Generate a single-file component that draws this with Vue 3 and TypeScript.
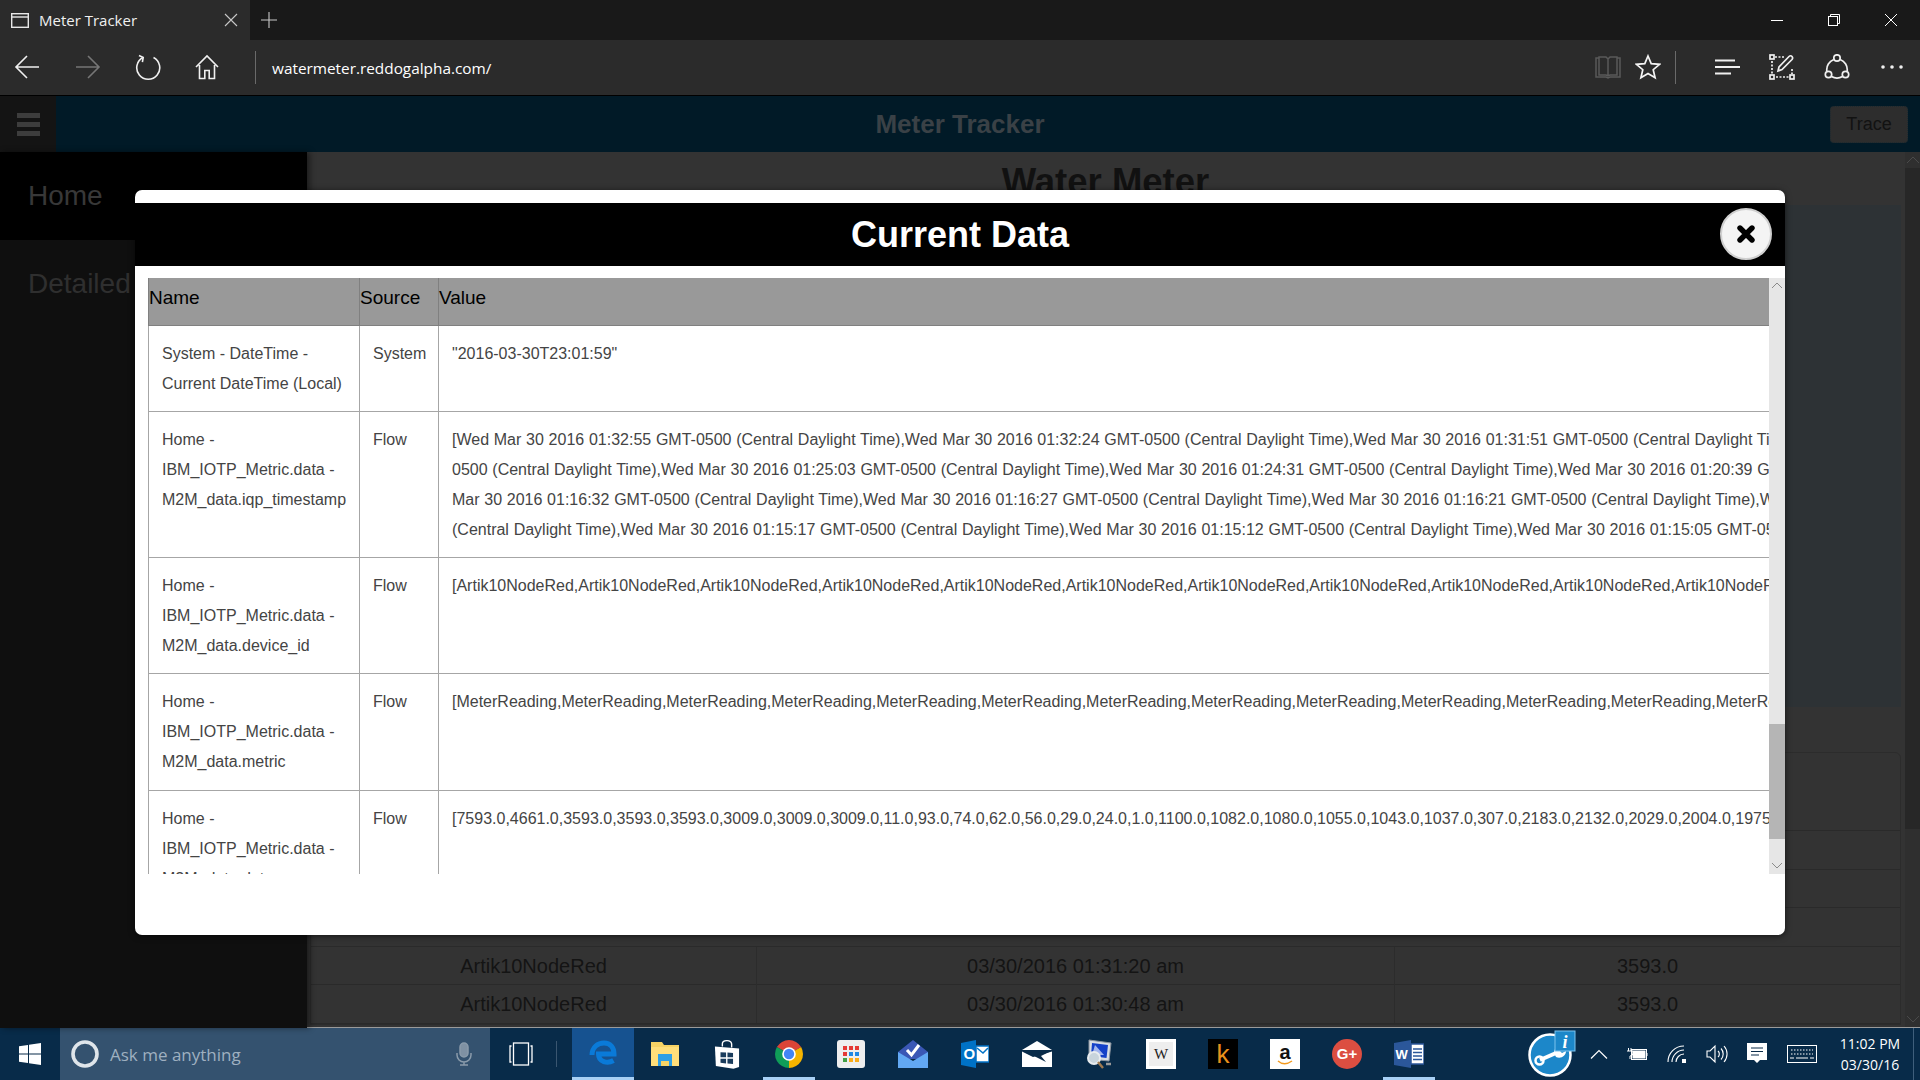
<script setup lang="ts">
interface Row {
  name: string[]
  source: string
  value: string[]
}

const dates = '[Wed Mar 30 2016 01:32:55 GMT-0500 (Central Daylight Time),Wed Mar 30 2016 01:32:24 GMT-0500 (Central Daylight Time),Wed Mar 30 2016 01:31:51 GMT-0500 (Central Daylight Time),Wed Mar 30 2016 01:31:20 GMT-'

const rows: Row[] = [
  {
    name: ['System - DateTime -', 'Current DateTime (Local)'],
    source: 'System',
    value: ['"2016-03-30T23:01:59"'],
  },
  {
    name: ['Home -', 'IBM_IOTP_Metric.data -', 'M2M_data.iqp_timestamp'],
    source: 'Flow',
    value: [
      dates,
      '0500 (Central Daylight Time),Wed Mar 30 2016 01:25:03 GMT-0500 (Central Daylight Time),Wed Mar 30 2016 01:24:31 GMT-0500 (Central Daylight Time),Wed Mar 30 2016 01:20:39 GMT-0500 (Central Daylight Time),Wed',
      'Mar 30 2016 01:16:32 GMT-0500 (Central Daylight Time),Wed Mar 30 2016 01:16:27 GMT-0500 (Central Daylight Time),Wed Mar 30 2016 01:16:21 GMT-0500 (Central Daylight Time),Wed Mar 30 2016 01:16:15 GMT-0500',
      '(Central Daylight Time),Wed Mar 30 2016 01:15:17 GMT-0500 (Central Daylight Time),Wed Mar 30 2016 01:15:12 GMT-0500 (Central Daylight Time),Wed Mar 30 2016 01:15:05 GMT-0500 (Central Daylight Time),Wed',
    ],
  },
  {
    name: ['Home -', 'IBM_IOTP_Metric.data -', 'M2M_data.device_id'],
    source: 'Flow',
    value: ['[' + Array(16).fill('Artik10NodeRed').join(',')],
  },
  {
    name: ['Home -', 'IBM_IOTP_Metric.data -', 'M2M_data.metric'],
    source: 'Flow',
    value: ['[' + Array(16).fill('MeterReading').join(',')],
  },
  {
    name: ['Home -', 'IBM_IOTP_Metric.data -', 'M2M_data.data'],
    source: 'Flow',
    value: ['[7593.0,4661.0,3593.0,3593.0,3593.0,3009.0,3009.0,3009.0,11.0,93.0,74.0,62.0,56.0,29.0,24.0,1.0,1100.0,1082.0,1080.0,1055.0,1043.0,1037.0,307.0,2183.0,2132.0,2029.0,2004.0,1975.0,1950.0,1925.0'],
  },
]

const coveredRows = [1, 2, 3]

const readings = [
  { device: 'Artik10NodeRed', time: '03/30/2016 01:31:20 am', value: '3593.0' },
  { device: 'Artik10NodeRed', time: '03/30/2016 01:30:48 am', value: '3593.0' },
]
</script>

<template>
  <div class="screen">
    <!-- Browser tab strip -->
    <div class="tabstrip">
      <div class="tab">
        <svg class="tab-icon" width="18" height="15" viewBox="0 0 18 15" fill="none" stroke="#e8e8e8" stroke-width="1.4">
          <rect x="0.7" y="0.7" width="16.6" height="13.6" />
          <path d="M1 4h16" />
        </svg>
        <span class="tab-title">Meter Tracker</span>
        <svg class="tab-close" width="14" height="14" viewBox="0 0 14 14" stroke="#c8c8c8" stroke-width="1.1">
          <path d="M1 1l12 12M13 1L1 13" />
        </svg>
      </div>
      <svg class="tab-add" width="18" height="18" viewBox="0 0 18 18" stroke="#c8c8c8" stroke-width="1.1">
        <path d="M9 1v16M1 9h16" />
      </svg>
      <div class="winctl">
        <span class="winbtn">
          <svg width="14" height="14" viewBox="0 0 14 14" stroke="#fff" stroke-width="1"><path d="M1 7.5h12" /></svg>
        </span>
        <span class="winbtn">
          <svg width="14" height="14" viewBox="0 0 14 14" fill="none" stroke="#fff" stroke-width="1"><rect x="1.5" y="3.5" width="9" height="9" /><path d="M3.5 3.5v-2h9v9h-2" /></svg>
        </span>
        <span class="winbtn">
          <svg width="14" height="14" viewBox="0 0 14 14" stroke="#fff" stroke-width="1"><path d="M1 1l12 12M13 1L1 13" /></svg>
        </span>
      </div>
    </div>

    <!-- Browser toolbar -->
    <div class="toolbar">
      <svg class="tb-nav" width="26" height="26" viewBox="0 0 26 26" fill="none" stroke="#f0f0f0" stroke-width="1.6"><path d="M25 13H2M13 2L2 13l11 11" /></svg>
      <svg class="tb-nav" width="26" height="26" viewBox="0 0 26 26" fill="none" stroke="#767676" stroke-width="1.6"><path d="M1 13h23M13 2l11 11-11 11" /></svg>
      <svg class="tb-nav tb-refresh" width="26" height="28" viewBox="0 0 26 28" fill="none" stroke="#f0f0f0" stroke-width="1.6"><path d="M8 4.5a11.5 11.5 0 1 0 10.5 0" /><path d="M4 2.5l4.2 2-.8 4.6" /></svg>
      <svg class="tb-nav tb-home" width="24" height="26" viewBox="0 0 24 26" fill="none" stroke="#f0f0f0" stroke-width="1.6"><path d="M1 13L12 2l11 11M4.5 11v13.5h5.3v-8h4.4v8h5.3V11" /></svg>
      <span class="tb-sep tb-sep-left"></span>
      <span class="url">watermeter.reddogalpha.com/</span>
      <div class="tb-right">
        <svg class="tb-r" width="26" height="24" viewBox="0 0 26 24" fill="none" stroke="#5a5a5a" stroke-width="1.5"><path d="M4 3H1v19h10l2 1 2-1h10V3h-3" /><path d="M4 20V2h7l2 2 2-2h7v18h-7l-2 1-2-1zM13 4v17" /></svg>
        <svg class="tb-r tb-star" width="26" height="26" viewBox="0 0 26 26" fill="none" stroke="#f4f4f4" stroke-width="1.7"><path d="M13 2l3.200 7.600 8.300.7-6.300 5.400 1.900 8.100L13 19.500l-7.100 4.300 1.900-8.100-6.300-5.400 8.300-.7z" /></svg>
        <span class="tb-sep"></span>
        <svg class="tb-r tb-hub" width="26" height="16" viewBox="0 0 26 16" stroke="#f0f0f0" stroke-width="1.8"><path d="M1 1.500h20M1 8h25M1 14.500h16" /></svg>
        <svg class="tb-r tb-note" width="26" height="26" viewBox="0 0 26 26" fill="none" stroke="#f0f0f0" stroke-width="1.7">
          <path d="M6 3h10M3 7v13M7 23h13M23 15v5" stroke-dasharray="2 1.500" />
          <rect x="1" y="1" width="4" height="4" /><rect x="1" y="21" width="4" height="4" /><rect x="21" y="21" width="4" height="4" />
          <path d="M9 17l1-4L20 2.500c1-1 2.200-1 3 0s.8 2 0 3L13 15.500z" />
        </svg>
        <svg class="tb-r tb-share" width="26" height="26" viewBox="0 0 26 26" fill="none" stroke="#f0f0f0" stroke-width="1.7">
          <circle cx="13" cy="4" r="3.200" /><circle cx="4.500" cy="20.500" r="3.200" /><circle cx="21.500" cy="20.500" r="3.200" />
          <path d="M9.800 5.500a11 11 0 0 0-7 11.500M16.200 5.500a11 11 0 0 1 7 11.500M7.500 22.500a11 11 0 0 0 11 0" />
        </svg>
        <svg class="tb-r tb-more" width="24" height="6" viewBox="0 0 24 6" fill="#f0f0f0"><circle cx="3" cy="3" r="1.800" /><circle cx="12" cy="3" r="1.800" /><circle cx="21" cy="3" r="1.800" /></svg>
      </div>
    </div>

    <!-- The page -->
    <div class="app">
      <header class="app-head">
        <div class="head-left">
          <div class="burger"><span></span><span></span><span></span></div>
        </div>
        <div class="app-title">Meter Tracker</div>
        <div class="head-right"><button class="trace">Trace</button></div>
      </header>
      <div class="app-body">
        <nav class="sidebar">
          <div class="side-item side-active">Home</div>
          <div class="side-item">Detailed</div>
        </nav>
        <main class="content">
          <div class="page">
            <h1 class="page-title">Water Meter</h1>
            <div class="chart-panel"></div>
            <div class="history">
              <div class="history-head"></div>
              <div v-for="c in coveredRows" :key="c" class="history-row"></div>
              <div v-for="r in readings" :key="r.time" class="history-row">
                <span class="hc hc-a">{{ r.device }}</span>
                <span class="hc hc-b">{{ r.time }}</span>
                <span class="hc hc-c">{{ r.value }}</span>
              </div>
            </div>
          </div>
          <div class="page-scroll">
            <svg class="chev" width="14" height="8" viewBox="0 0 14 8" fill="none" stroke="#4a4a4a"><path d="M1 7l6-6 6 6" /></svg>
            <div class="page-thumb"></div>
            <div class="page-track"></div>
            <svg class="chev" width="14" height="8" viewBox="0 0 14 8" fill="none" stroke="#4a4a4a"><path d="M1 1l6 6 6-6" /></svg>
          </div>
        </main>
      </div>
    </div>

    <!-- Windows taskbar -->
    <footer class="taskbar">
      <div class="start">
        <svg width="22" height="22" viewBox="0 0 22 22" fill="#fff"><path d="M0 3.200l9-1.300v8.500H0zM10 1.700L22 0v10.400H10zM0 11.500h9V20L0 18.800zM10 11.500h12V22l-12-1.800z" /></svg>
      </div>
      <div class="search">
        <svg class="cortana" width="30" height="30" viewBox="0 0 30 30" fill="none"><circle cx="15" cy="15" r="12" stroke="#dfe5ea" stroke-width="3.600" /></svg>
        <span class="search-text">Ask me anything</span>
        <svg class="mic" width="16" height="24" viewBox="0 0 16 24" fill="none" stroke="#8a9bab" stroke-width="1.500"><rect x="4" y="1" width="8" height="14" rx="4" fill="#7f91a3" /><path d="M1 11v2a7 7 0 0 0 14 0v-2M8 20v3M4 23h8" /></svg>
      </div>
      <div class="taskview">
        <svg width="24" height="24" viewBox="0 0 24 24" fill="none" stroke="#fff" stroke-width="1.300"><rect x="4.500" y="1" width="15" height="22" /><path d="M2.500 4H1v16h1.500M21.500 4H23v16h-1.500" /></svg>
      </div>
      <span class="task-sep"></span>

      <div class="slot slot-edge">
        <svg width="28" height="28" viewBox="0 0 28 28" fill="none" stroke="#0a7ad8" stroke-width="5"><path d="M3 15C3 7 9 3 15 3c6.500 0 10 4.500 10 11H9.500c0 8 9 10 15 6.500" /></svg>
      </div>
      <div class="slot">
        <svg width="28" height="24" viewBox="0 0 28 24">
          <path d="M0 0h11l2 3h15v21H0z" fill="#f6d365" />
          <path d="M0 5h28v19H0z" fill="#ffdf7a" />
          <path d="M7 12h14v12h-3v-5h-8v5H7z" fill="#2d9fe6" />
          <path d="M10 19h8v5h-8z" fill="#f6d365" />
        </svg>
      </div>
      <div class="slot">
        <svg width="26" height="32" viewBox="0 0 28 32">
          <path d="M9 8V5c0-4 9-5 10 0v4" fill="none" stroke="#fff" stroke-width="1.500" />
          <path d="M1 8l26 2v20l-6 2L2 29z" fill="#fff" />
          <path d="M7 14l6 .4v5.200H7zM14.500 14.500l6 .4v4.700h-6zM7 21h6v5.200l-6-.7zM14.500 21h6v5.900l-6-.6z" fill="#1a3c5c" />
        </svg>
      </div>
      <div class="slot slot-open">
        <svg width="28" height="28" viewBox="0 0 28 28">
          <path d="M14 14L1.880 7A14 14 0 0 1 26.120 7z" fill="#db4437" />
          <path d="M14 14L26.120 7A14 14 0 0 1 14 28z" fill="#f4b400" />
          <path d="M14 14L14 28A14 14 0 0 1 1.880 7z" fill="#0f9d58" />
          <circle cx="14" cy="14" r="6.800" fill="#fff" /><circle cx="14" cy="14" r="5.200" fill="#4285f4" />
        </svg>
      </div>
      <div class="slot">
        <svg width="28" height="28" viewBox="0 0 28 28">
          <rect width="28" height="28" rx="3" fill="#eeeeee" />
          <g fill="#e53935"><rect x="6" y="6" width="4" height="4" /><rect x="12" y="6" width="4" height="4" /><rect x="18" y="6" width="4" height="4" /><rect x="6" y="12" width="4" height="4" /></g>
          <g fill="#1e88e5"><rect x="12" y="12" width="4" height="4" /><rect x="18" y="12" width="4" height="4" /></g>
          <g fill="#43a047"><rect x="6" y="18" width="4" height="4" /></g>
          <g fill="#fbac19"><rect x="12" y="18" width="4" height="4" /><rect x="18" y="18" width="4" height="4" /></g>
        </svg>
      </div>
      <div class="slot">
        <svg width="30" height="28" viewBox="0 0 30 28">
          <path d="M0 12L15 0l15 12v7H0z" fill="#3a57b5" />
          <path d="M0 12l15 9 15-9v16H0z" fill="#62a8f3" />
          <path d="M9 10l4.500 5L21 5" fill="none" stroke="#fff" stroke-width="3" />
        </svg>
      </div>
      <div class="slot">
        <svg width="28" height="28" viewBox="0 0 28 28">
          <path d="M0 3l15-3v28L0 25z" fill="#0072c6" />
          <path d="M15 6h13v16H15z" fill="#fff" stroke="#0072c6" stroke-width="1.500" />
          <path d="M16 8l6 5 5-5" fill="none" stroke="#0072c6" stroke-width="1.500" />
          <text class="ol-o" x="2.500" y="19">O</text>
        </svg>
      </div>
      <div class="slot">
        <svg width="30" height="26" viewBox="0 0 30 26">
          <path d="M15 0l15 9H0z" fill="#fff" />
          <path d="M0 10.500l11 5.500 19-5.500V26H0z" fill="#fff" />
          <path d="M12 15L30 9.500 19 15l5 6z" fill="#0a2b48" />
        </svg>
      </div>
      <div class="slot">
        <svg width="28" height="30" viewBox="0 0 28 30">
          <path d="M4 1l22 3-2 18-20-2z" fill="#d8dde3" stroke="#8b949e" />
          <path d="M7 4l16 2-1.500 13L6 17z" fill="#1440c8" />
          <path d="M10 6l9 10-12 0z" fill="#dfe8ff" opacity=".7" />
          <circle cx="9" cy="19" r="6" fill="#c8d4dc" stroke="#e8ecef" stroke-width="2" />
          <path d="M13 23l5 6" stroke="#a07a50" stroke-width="2.500" />
          <path d="M21 25h5" stroke="#999" stroke-width="2.500" />
        </svg>
      </div>
      <div class="slot">
        <div class="tile tile-w"><span>W</span></div>
      </div>
      <div class="slot">
        <div class="tile tile-k">k</div>
      </div>
      <div class="slot">
        <div class="tile tile-a">
          <span>a</span>
          <svg width="16" height="5" viewBox="0 0 16 5" fill="none" stroke="#f39a1f" stroke-width="1.500"><path d="M1 1c4 3.500 9 3.500 14 0" /></svg>
        </div>
      </div>
      <div class="slot">
        <div class="gplus">G+</div>
      </div>
      <div class="slot slot-open">
        <svg width="30" height="28" viewBox="0 0 30 28">
          <path d="M0 3l17-3v28L0 25z" fill="#2b579a" />
          <path d="M17 4h13v20H17z" fill="#fff" stroke="#2b579a" stroke-width="1.500" />
          <path d="M19 9h9M19 12.500h9M19 16h9M19 19.500h9" stroke="#2b579a" stroke-width="1.500" />
          <text class="wd-w" x="1.500" y="19">W</text>
        </svg>
      </div>

      <div class="tray">
        <div class="tray-repair">
          <svg width="50" height="48" viewBox="0 0 50 48">
            <circle cx="22" cy="25" r="20.500" fill="#1c87c9" stroke="#fff" stroke-width="2.500" />
            <path d="M12 30l16-7" stroke="#fff" stroke-width="4" />
            <circle cx="11.500" cy="30.500" r="4" fill="none" stroke="#fff" stroke-width="2.500" />
            <path d="M26 23c0-5 4-7 8-6l-3 3 3 3 4-2c0 5-5 8-10 6" fill="#fff" />
            <rect x="27" y="1" width="20" height="20" fill="#1c87c9" stroke="#7cc3ee" />
            <text class="info-i" x="37" y="18">i</text>
          </svg>
        </div>
        <div class="tray-ic tray-chev">
          <svg width="18" height="10" viewBox="0 0 18 10" fill="none" stroke="#fff" stroke-width="1.200"><path d="M1 9.500L9 1.500l8 8" /></svg>
        </div>
        <div class="tray-ic">
          <svg width="22" height="14" viewBox="0 0 22 14" fill="none" stroke="#fff"><rect x="5.500" y="2.500" width="15" height="10" /><rect x="7" y="4" width="12" height="7" fill="#fff" /><path d="M21 6v3M2.500 1v3M5 1v3" /><path d="M1 4h6v2a3 3 0 0 1-3 3v3" /></svg>
        </div>
        <div class="tray-ic">
          <svg width="20" height="18" viewBox="0 0 20 18" fill="none" stroke="#fff" stroke-width="1.100"><path d="M1 17C1 8 8 1 17 1M5 17c0-6.500 5.500-12 12-12M9 17c0-4 3.500-8 8-8" /><rect x="15" y="14" width="4" height="4" fill="#fff" stroke="none" /></svg>
        </div>
        <div class="tray-ic">
          <svg width="22" height="20" viewBox="0 0 22 20" fill="none" stroke="#fff" stroke-width="1.100"><path d="M1 7h3l5-5v16l-5-5H1zM12 7a4 4 0 0 1 0 6M15 4.500a8 8 0 0 1 0 11M18 2a12 12 0 0 1 0 16" /></svg>
        </div>
        <div class="tray-ic">
          <svg width="20" height="22" viewBox="0 0 20 22"><path d="M0 0h20v17h-7l-3 3-3-3H0z" fill="#fff" /><path d="M4 5h12M4 8.500h12M4 12h8" stroke="#0a2b48" stroke-width="1.200" /></svg>
        </div>
        <div class="tray-ic tray-kbd">
          <svg width="30" height="18" viewBox="0 0 30 18" fill="none" stroke="#fff"><rect x="0.500" y="0.500" width="29" height="17" /><path d="M4 5h22M4 9h22" stroke-dasharray="1.500 1.500" /><path d="M3 13h4M9 13h12M23 13h4" /></svg>
        </div>
        <div class="clock">
          <span>11:02 PM</span>
          <span>03/30/16</span>
        </div>
        <span class="show-desktop"></span>
      </div>
    </footer>

    <!-- Modal over the page -->
    <section class="modal">
      <div class="modal-head">
        <h2 class="modal-title">Current Data</h2>
        <button class="modal-close" aria-label="Close">
          <svg width="18" height="18" viewBox="0 0 18 18" stroke="#000" stroke-width="5.400" stroke-linecap="round"><path d="M3 3l12 12M15 3L3 15" /></svg>
        </button>
      </div>
      <div class="modal-body">
        <div class="table-clip">
          <table class="data">
            <colgroup>
              <col class="col-name" />
              <col class="col-source" />
              <col class="col-value" />
            </colgroup>
            <thead>
              <tr><th>Name</th><th>Source</th><th>Value</th></tr>
            </thead>
            <tbody>
              <tr v-for="row in rows" :key="row.name.join()">
                <td><div v-for="n in row.name" :key="n">{{ n }}</div></td>
                <td>{{ row.source }}</td>
                <td><div v-for="v in row.value" :key="v" class="nowrap">{{ v }}</div></td>
              </tr>
            </tbody>
          </table>
        </div>
        <div class="vscroll">
          <svg class="chev" width="12" height="7" viewBox="0 0 12 7" fill="none" stroke="#8a8a8a"><path d="M1 6l5-5 5 5" /></svg>
          <div class="vs-gap"></div>
          <div class="vs-thumb"></div>
          <div class="vs-rest"></div>
          <svg class="chev" width="12" height="7" viewBox="0 0 12 7" fill="none" stroke="#8a8a8a"><path d="M1 1l5 5 5-5" /></svg>
        </div>
      </div>
    </section>
  </div>
</template>

<style scoped>
.screen {
  position: relative;
  width: 1920px;
  height: 1080px;
  overflow: hidden;
  display: flex;
  flex-direction: column;
  font-family: "Liberation Sans", Arial, sans-serif;
  background: #333;
}

/* tab strip */
.tabstrip {
  height: 40px;
  flex: none;
  display: flex;
  align-items: center;
  background: #191919;
}
.tab {
  width: 250px;
  height: 40px;
  display: flex;
  align-items: center;
  padding-left: 11px;
  box-sizing: border-box;
  background: #2b2b2b;
}
.tab-title {
  margin-left: 10px;
  color: #f0f0f0;
  font: 15px "Open Sans", sans-serif;
  flex: 1;
}
.tab-close { margin-right: 12px; }
.tab-add { margin-left: 10px; }
.winctl { margin-left: auto; display: flex; padding-right: 1px; }
.winbtn {
  width: 57px;
  display: flex;
  justify-content: center;
}

/* toolbar */
.toolbar {
  height: 56px;
  flex: none;
  box-sizing: border-box;
  border-bottom: 1px solid #000;
  background: #2b2b2b;
  display: flex;
  align-items: center;
  padding-left: 14px;
  padding-bottom: 1px;
}
.tb-nav { margin-right: 35px; flex: none; }
.tb-refresh { margin-left: -1px; }
.tb-home { margin-left: -1px; margin-right: 0; }
.tb-sep {
  width: 1px;
  height: 33px;
  background: #6a6a6a;
  flex: none;
}
.tb-sep-left { margin-left: 36px; }
.url {
  margin-left: 16px;
  color: #fff;
  font: 15.35px "Open Sans", sans-serif;
  padding-top: 1px;
}
.tb-right {
  margin-left: auto;
  display: flex;
  align-items: center;
  padding-right: 16px;
}
.tb-star { margin-left: 14px; margin-right: 14px; }
.tb-hub { margin-left: 38px; }
.tb-note { margin-left: 29px; }
.tb-share { margin-left: 29px; }
.tb-more { margin-left: 30px; }

/* page */
.app {
  flex: 1;
  min-height: 0;
  display: flex;
  flex-direction: column;
}
.app-head {
  height: 56px;
  flex: none;
  display: grid;
  grid-template-columns: 1fr auto 1fr;
  align-items: center;
  background: #011a27;
}
.head-left { display: flex; height: 100%; }
.burger {
  width: 56px;
  height: 100%;
  box-sizing: border-box;
  background: #141414;
  display: flex;
  flex-direction: column;
  justify-content: center;
  align-items: center;
  gap: 4px;
}
.burger span {
  width: 23px;
  height: 5px;
  background: #3d3d3d;
}
.app-title {
  color: #3a4146;
  font-weight: 700;
  font-size: 26px;
}
.head-right { display: flex; justify-content: flex-end; padding-right: 12px; }
.trace {
  width: 78px;
  height: 37px;
  padding: 0;
  border: 1px dotted #1d2a30;
  border-radius: 4px;
  background: #2d2d2d;
  color: #121212;
  font: 18px "Liberation Sans", Arial, sans-serif;
}
.app-body {
  flex: 1;
  min-height: 0;
  display: flex;
}
.sidebar {
  width: 307px;
  flex: none;
  background: #0f0f0f;
  box-shadow: 3px 0 6px rgba(0, 0, 0, 0.45);
  z-index: 1;
}
.side-item {
  height: 88px;
  padding-left: 28px;
  display: flex;
  align-items: center;
  color: #2f2f2f;
  font-size: 28px;
}
.side-active { background: #000; color: #383838; }
.content {
  flex: 1;
  min-width: 0;
  display: flex;
  overflow: hidden;
  background: #333;
  border-bottom: 1px solid #9a9a9a;
  box-sizing: border-box;
}
.page {
  flex: 1;
  min-width: 0;
  padding: 0 4px 0 3px;
  overflow: hidden;
}
.page-title {
  margin: 0;
  height: 53px;
  box-sizing: border-box;
  padding-top: 9px;
  line-height: 41px;
  text-align: center;
  color: #111;
  font-size: 36.5px;
  font-weight: 700;
}
.chart-panel {
  height: 502px;
  background: #2d3235;
}
.history {
  margin-top: 45px;
  border: 1px solid #2c2c2c;
  border-radius: 6px 6px 0 0;
}
.history-head { height: 77px; border-bottom: 1px solid #2a2a2a; }
.history-row {
  height: 37.6px;
  border-bottom: 1px solid #2a2a2a;
  display: grid;
  grid-template-columns: 445px 639px 1fr;
  align-items: center;
  text-align: center;
  color: #141414;
  font-size: 20px;
}
.hc { height: 100%; line-height: 38px; }
.hc-b { border-left: 1px solid #2c2c2c; border-right: 1px solid #2c2c2c; }
.page-scroll {
  width: 15px;
  flex: none;
  display: flex;
  flex-direction: column;
  align-items: center;
  background: #2f2f2f;
}
.page-scroll .chev { margin: 4px 0; flex: none; }
.page-thumb { width: 100%; height: 661px; background: #272727; }
.page-track { flex: 1; width: 100%; }

/* taskbar */
.taskbar {
  height: 52px;
  flex: none;
  display: flex;
  align-items: center;
  background: #082b49;
}
.start {
  width: 60px;
  display: flex;
  justify-content: center;
}
.search {
  width: 430px;
  height: 52px;
  box-sizing: border-box;
  background: #34526f;
  display: flex;
  align-items: center;
  padding-left: 10px;
}
.search-text {
  margin-left: 10px;
  padding-top: 1px;
  color: #9fb0c0;
  font: 17px "Open Sans", sans-serif;
  flex: 1;
}
.mic { margin-right: 18px; }
.taskview {
  width: 61px;
  display: flex;
  justify-content: center;
}
.task-sep {
  width: 1px;
  height: 26px;
  margin: 0 15px 0 5px;
  background: #3a5670;
}
.slot {
  width: 62px;
  height: 52px;
  flex: none;
  box-sizing: border-box;
  display: flex;
  align-items: center;
  justify-content: center;
  position: relative;
}
.slot-edge {
  background: #165290;
  border-bottom: 3px solid #a8d0f5;
  padding-top: 3px;
}
.slot-open::after {
  content: "";
  position: absolute;
  left: 5px;
  right: 5px;
  bottom: 0;
  height: 3px;
  background: #a8d0f5;
}
.tile {
  width: 30px;
  height: 30px;
  display: flex;
  align-items: center;
  justify-content: center;
}
.tile-w { background: #fff; }
.tile-w span {
  width: 24px;
  height: 24px;
  background: #eee;
  color: #222;
  font: 15px/24px "Liberation Serif", serif;
  text-align: center;
}
.tile-k {
  background: #000;
  color: #e8911c;
  font: 26px "Liberation Sans", sans-serif;
}
.tile-a {
  background: #fff;
  color: #111;
  flex-direction: column;
  font: 700 20px/16px "Liberation Sans", sans-serif;
}
.gplus {
  width: 30px;
  height: 30px;
  border-radius: 50%;
  background: #dc4e41;
  color: #fff;
  font: 700 15px/30px "Liberation Sans", sans-serif;
  text-align: center;
}
.ol-o {
  fill: #fff;
  font: 700 15px "Liberation Sans", sans-serif;
}
.wd-w {
  fill: #fff;
  font: 700 13px "Liberation Sans", sans-serif;
}
.info-i {
  fill: #fff;
  text-anchor: middle;
  font: italic 700 18px "Liberation Serif", serif;
}
.tray {
  margin-left: auto;
  height: 52px;
  display: flex;
  align-items: center;
}
.tray-repair { width: 60px; display: flex; justify-content: flex-start; margin-left: 8px; }
.tray-ic {
  width: 40px;
  display: flex;
  justify-content: center;
}
.tray-chev { width: 37px; margin-left: -8px; }
.tray-kbd { width: 50px; }
.clock {
  width: 86px;
  display: flex;
  flex-direction: column;
  align-items: center;
  gap: 3px;
  color: #fff;
  font: 14px/18px "Open Sans", sans-serif;
}
.show-desktop {
  width: 7px;
  height: 52px;
  box-sizing: border-box;
  border-left: 1px solid #3f5f7c;
}

/* modal */
.modal {
  position: absolute;
  left: 135px;
  top: 190px;
  width: 1650px;
  height: 745px;
  box-sizing: border-box;
  padding-top: 13px;
  border-radius: 7px;
  background: #fff;
  box-shadow: 0 1px 6px rgba(0, 0, 0, 0.6);
  overflow: hidden;
  z-index: 5;
}
.modal-head {
  position: relative;
  height: 63px;
  background: #000;
  display: flex;
  align-items: center;
  justify-content: center;
}
.modal-title {
  margin: 0;
  color: #fff;
  font-size: 36px;
  font-weight: 700;
}
.modal-close {
  position: absolute;
  right: 13px;
  top: 5px;
  width: 52px;
  height: 52px;
  padding: 0;
  box-sizing: border-box;
  border: 2px solid #cfcfcf;
  border-radius: 50%;
  background: #f4f4f4;
  display: flex;
  align-items: center;
  justify-content: center;
}
.modal-body {
  margin-top: 12px;
  height: 596px;
  display: flex;
  padding-left: 13px;
}
.table-clip {
  flex: 1;
  min-width: 0;
  overflow: hidden;
}
.data {
  width: 3000px;
  table-layout: fixed;
  border-collapse: collapse;
  font-size: 16px;
  color: #444;
}
.col-name { width: 211px; }
.col-source { width: 79px; }
.data th {
  height: 47px;
  padding: 0 0 7px 0;
  box-sizing: border-box;
  background: #999;
  border: 1px solid #808080;
  border-top: none;
  color: #000;
  font-size: 19px;
  font-weight: 400;
  text-align: left;
}
.data td {
  padding: 13px 12px 12px 13px;
  border: 1px solid #a6a6a6;
  vertical-align: top;
  line-height: 30px;
}
.data tbody tr:nth-child(4) td { padding-bottom: 13px; }
.nowrap { white-space: nowrap; word-spacing: 0.28px; }
.vscroll {
  width: 16px;
  flex: none;
  display: flex;
  flex-direction: column;
  align-items: center;
  background: #e6e6e6;
}
.vscroll .chev { flex: none; margin: 4px 0 5px; }
.vs-gap { height: 430px; flex: none; }
.vs-thumb { width: 100%; height: 115px; background: #b5b5b5; flex: none; }
.vs-rest { flex: 1; }
</style>

<style>
html, body { margin: 0; padding: 0; background: #333; }
</style>
